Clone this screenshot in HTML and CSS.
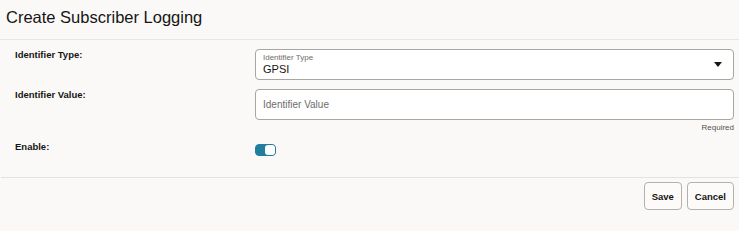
FILE: index.html
```html
<!DOCTYPE html>
<html lang="en">
<head>
    <meta charset="UTF-8">
    <meta name="viewport" content="width=device-width, initial-scale=1.0">
    <title>Create Subscriber Logging</title>
    <link rel="stylesheet" href="styles.css">
</head>
<body>
    <div class="page">
        <div class="header">
            <h1 class="title">Create Subscriber Logging</h1>
        </div>
        <div class="form">
            <div class="row">
                <div class="label">Identifier Type:</div>
                <div class="field">
                    <div class="select">
                        <div class="select-text">
                            <div class="float-label">Identifier Type</div>
                            <div class="value">GPSI</div>
                        </div>
                        <svg class="arrow" width="8" height="5" viewBox="0 0 8 5">
                            <path d="M0 0 L8 0 L4 5 Z" fill="#161513"/>
                        </svg>
                    </div>
                </div>
            </div>
            <div class="row">
                <div class="label">Identifier Value:</div>
                <div class="field">
                    <div class="input">
                        <span class="placeholder">Identifier Value</span>
                    </div>
                    <div class="help">Required</div>
                </div>
            </div>
            <div class="row row-enable">
                <div class="label">Enable:</div>
                <div class="field">
                    <div class="switch on">
                        <div class="knob"></div>
                    </div>
                </div>
            </div>
        </div>
        <div class="footer">
            <button class="btn">Save</button>
            <button class="btn">Cancel</button>
        </div>
    </div>
</body>
</html>
```

FILE: styles.css
```css
body {
    margin: 0;
    font-family: "Liberation Sans", Arial, sans-serif;
    background-color: #faf9f8;
    color: #161513;
}
.header {
    height: 40px;
    box-sizing: border-box;
    padding: 6px 6px 0;
    border-bottom: 1px solid #e8e6e4;
}
.title {
    margin: 0;
    font-size: 16.5px;
    font-weight: normal;
    line-height: 22px;
}
.form {
    padding: 9px 5px 0 15px;
}
.row {
    display: grid;
    grid-template-columns: 240px 1fr;
    margin-bottom: 9px;
}
.label {
    font-size: 9.5px;
    font-weight: bold;
    line-height: 11px;
}
.select,
.input {
    height: 31px;
    box-sizing: border-box;
    border: 1px solid #a9a6a2;
    border-radius: 4px;
    background-color: #fff;
    display: flex;
    align-items: center;
    padding: 0 11px 0 7px;
}
.select {
    justify-content: space-between;
}
.float-label {
    font-size: 8px;
    color: #6f6c69;
    line-height: 10px;
}
.value {
    font-size: 11px;
    line-height: 13px;
}
.placeholder {
    font-size: 10px;
    color: #6f6c69;
}
.help {
    text-align: right;
    font-size: 8px;
    color: #55524f;
    margin-top: 3px;
}
.row-enable {
    margin-top: 7px;
}
.switch {
    width: 21px;
    height: 12px;
    box-sizing: border-box;
    border-radius: 4px;
    background-color: #227e9e;
    border: 1px solid #227e9e;
    position: relative;
    margin-top: 3px;
}
.knob {
    position: absolute;
    right: 0;
    top: 0;
    width: 10px;
    height: 10px;
    border-radius: 3px;
    background-color: #fff;
}
.footer {
    margin-top: 21px;
    margin-left: 1px;
    border-top: 1px solid #e4e2e0;
    padding: 4px 5px 0 0;
    display: flex;
    justify-content: flex-end;
    gap: 5px;
}
.btn {
    height: 28px;
    box-sizing: border-box;
    padding: 0 7px;
    font-family: "Liberation Sans", Arial, sans-serif;
    font-size: 9.5px;
    font-weight: bold;
    color: #161513;
    background-color: #fcfbfa;
    border: 1px solid #b3b0ad;
    border-radius: 4px;
}
```
